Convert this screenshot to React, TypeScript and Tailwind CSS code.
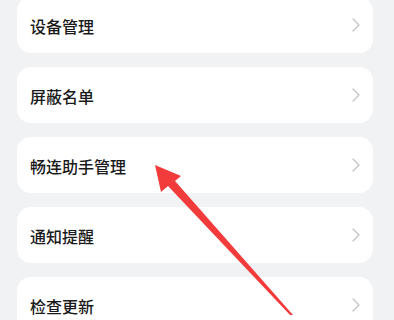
import React from "react";

const items = ["设备管理", "屏蔽名单", "畅连助手管理", "通知提醒", "检查更新"];

function Chevron() {
  return (
    <svg width="8" height="14" viewBox="0 0 8 14" fill="none">
      <path d="M1 1 L7 7 L1 13" stroke="#c4c4c4" strokeWidth="1.3" strokeLinecap="round" strokeLinejoin="round" />
    </svg>
  );
}

export default function App() {
  return (
    <div
      className="relative w-[394px] h-[320px] overflow-hidden bg-[#f1f2f4]"
      style={{ fontFamily: '"Noto Sans CJK SC", "Noto Sans", sans-serif' }}
    >
      <div className="flex flex-col gap-[14px] pl-[17px] pr-[21px] mt-[-3px]">
        {items.map((t) => (
          <div
            key={t}
            className="h-[56px] bg-white rounded-[14px] flex items-center justify-between pl-[13px] pr-[13px] shrink-0"
          >
            <span className="text-[16px] font-medium text-[#1a1a1a] leading-none pt-[2px]">{t}</span>
            <Chevron />
          </div>
        ))}
      </div>
      <svg className="absolute left-0 top-0 pointer-events-none" width="394" height="320" viewBox="0 0 394 320">
        <polygon
          points="155,165 181,176 175,181 293,315 290,315 168,186 161,192"
          fill="#f23b3b"
        />
      </svg>
    </div>
  );
}
